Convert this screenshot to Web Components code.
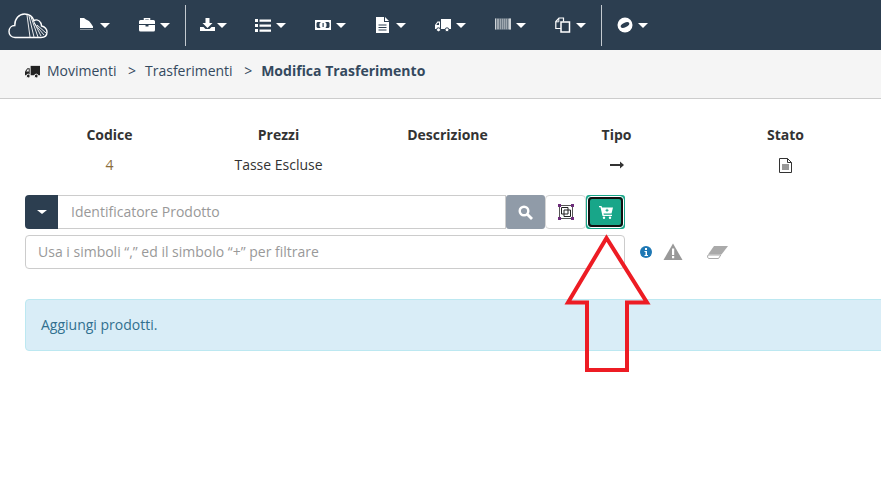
<!DOCTYPE html>
<html>
<head>
<meta charset="utf-8">
<title>Modifica Trasferimento</title>
<style>
    html, body { margin: 0; height: 100%; overflow: hidden; background: #fff; }
    body { font-family: "Open Sans", sans-serif; font-size: 14px; color: #333; position: relative; }
</style>
</head>
<body>
<app-navbar></app-navbar>
<app-breadcrumb>
    <crumb-item icon="truck">Movimenti</crumb-item>
    <crumb-item>Trasferimenti</crumb-item>
    <crumb-item current>Modifica Trasferimento</crumb-item>
</app-breadcrumb>
<info-table></info-table>
<product-search></product-search>
<filter-row></filter-row>
<info-alert>Aggiungi prodotti.</info-alert>
<red-arrow></red-arrow>

<script>
const ICONS = {
    report: '<path d="M1 1h4l2 1.500 3 1.500 2 2.500 2 3V11H1z" fill="currentColor"/><path d="M1 12.500h13" stroke="currentColor" opacity=".45"/>',
    briefcase: '<path d="M5.500 3V1.800h5V3" fill="none" stroke="currentColor" stroke-width="1.500"/><path d="M1.500 3h13A1.500 1.500 0 0 1 16 4.500V7H0V4.500A1.500 1.500 0 0 1 1.500 3zM0 8h6.500v1.500h3V8H16v5a1.500 1.500 0 0 1-1.500 1.500h-13A1.500 1.500 0 0 1 0 13z" fill="currentColor"/>',
    download: '<path d="M5.500 1h4v5h3L7.500 11l-5-5h3z" fill="currentColor"/><path d="M0 10h3.500l2 2h4l2-2H15v4H0z" fill="currentColor"/>',
    list: '<path d="M0 2h3v3H0zM0 7h3v3H0zM0 12h3v3H0z" fill="currentColor"/><path d="M4.500 2.500H16v2.200H4.500zM4.500 7.500H16v2.200H4.500zM4.500 12.500H16v2.200H4.500z" fill="currentColor"/>',
    money: '<path fill-rule="evenodd" d="M0 3h16v10H0zM2.500 5 1.500 6v4l1 1h11l1-1V6l-1-1z" fill="currentColor"/><circle cx="8" cy="8" r="3.600" fill="currentColor"/><path d="M7.500 6h1.200v4H7.500z" fill="#2c3e50"/>',
    file: '<path fill-rule="evenodd" d="M1 0h8v5h5v11H1zM3.500 7.500v1h8v-1zM3.500 10v1h8v-1zM3.500 12.500v1h8v-1z" fill="currentColor"/><path d="M10 0l4 4h-4z" fill="currentColor"/>',
    truck: '<path d="M6 2h10v10H6z" fill="currentColor"/><path d="M5 4.500H2.500L0 8v4h5z" fill="currentColor"/><path d="M2.800 5.700H4v2.300H1.300z" fill="var(--icon-bg,#2c3e50)"/><circle cx="3.500" cy="12.800" r="2" fill="currentColor" stroke="var(--icon-bg,#2c3e50)"/><circle cx="12" cy="12.800" r="2" fill="currentColor" stroke="var(--icon-bg,#2c3e50)"/>',
    barcode: '<path d="M0 1.500h16v11H0z" fill="currentColor" opacity=".55"/><path d="M1 1.500h1v11H1zM4 1.500h1v11H4zM6 1.500h1v11H6zM8 1.500h.8v11H8zM10 1.500h.8v11H10zM12 1.500h1v11h-1z" fill="#2c3e50" opacity=".45"/><path d="M0 1.500h1v11H0zM14 1.500h2v11h-2z" fill="currentColor" opacity=".5"/>',
    copy: '<path d="M6.500 11.500H.8V4.500L4 1h4.500v3.500" fill="none" stroke="currentColor" stroke-width="1.200"/><path d="M6 5h8.500v10H6z" fill="#2c3e50" stroke="currentColor" stroke-width="1.500"/><path d="M3.800 1.500v3.300H1" fill="none" stroke="currentColor"/>',
    compass: '<circle cx="8" cy="8" r="7.500" fill="currentColor"/><ellipse cx="8" cy="8" rx="4.600" ry="2.300" transform="rotate(-25 8 8)" fill="#2c3e50"/>'
};

class AppIcon extends HTMLElement {
    connectedCallback() {
        const size = this.getAttribute('size') || 16;
        this.attachShadow({mode: 'open'}).innerHTML = `
            <style>:host { display: inline-flex; width: ${size}px; height: ${size}px; } svg { display: block; }</style>
            <svg width="${size}" height="${size}" viewBox="0 0 16 16">${ICONS[this.getAttribute('name')]}</svg>`;
    }
}

class NavItem extends HTMLElement {
    connectedCallback() {
        const tight = this.hasAttribute('tight');
        this.attachShadow({mode: 'open'}).innerHTML = `
            <style>
                :host { display: flex; align-items: center; gap: ${tight ? 1 : 5}px; color: #fff; ${tight ? 'margin-right: -1px;' : ''} }
                .caret { width: 0; height: 0; border: 5px solid transparent; border-bottom: 0; border-top-color: #fff; margin-top: 1px; }
            </style>
            <app-icon name="${this.getAttribute('icon')}"></app-icon>
            <span class="caret"></span>`;
    }
}

class AppNavbar extends HTMLElement {
    constructor() {
        super();
        const items = (names) => names.map(n => `<nav-item icon="${n}"></nav-item>`).join('');
        this.attachShadow({mode: 'open'}).innerHTML = `
            <style>
                :host { display: flex; align-items: center; height: 50px; background: #2c3e50; }
                .logo { margin-left: 8px; width: 40px; height: 26px; margin-top: 2px; flex: none; }
                .group { display: flex; align-items: center; gap: 29px; }
                .sep { width: 1px; height: 41px; background: #c4cad0; margin: 0 15px 0 15px; }
            </style>
            <svg class="logo" viewBox="0 0 40 26" fill="none" stroke="#fff">
                <path stroke-width="1.400" d="M9 24.500H7C3 24.500 1 21.500 1 18.500C1 15 3.500 12.500 6.800 12.500C6.500 6 11 1 16.500 1C21 1 24.500 3.500 26 7.500C28 6.500 31 7 32.500 9.500C33.500 11 33.500 12.500 33.500 13C37 13.500 39 16.500 39 19C39 22.500 36.500 24.500 33 24.500Z"/>
                <path stroke-width=".9" d="M19 2 22 24M21 3 26 24M23 4 30 24M25 7 33 23M26 10 36 22M29 12 38 20"/>
            </svg>
            <div class="group" style="margin-left:31px">${items(['report','briefcase'])}</div>
            <div class="sep"></div>
            <div class="group" style="margin-left:-1px"><nav-item icon="download" tight></nav-item>${items(['list','money','file','truck','barcode','copy'])}</div>
            <div class="sep"></div>
            <div class="group">${items(['compass'])}</div>`;
    }
}

class CrumbItem extends HTMLElement {
    connectedCallback() {
        const icon = this.getAttribute('icon');
        this.attachShadow({mode: 'open'}).innerHTML = `
            <style>
                :host { display: inline-flex; align-items: center; color: #34495e; --icon-bg: #f5f5f5; }
                :host([current]) { font-weight: 700; }
                app-icon { color: #222; margin-right: 7px; }
            </style>
            ${icon ? `<app-icon name="${icon}" size="15"></app-icon>` : ''}<slot></slot>`;
    }
}

class AppBreadcrumb extends HTMLElement {
    constructor() {
        super();
        this.attachShadow({mode: 'open'}).innerHTML = `
            <style>
                :host { display: flex; align-items: flex-start; box-sizing: border-box; height: 49px; padding: 11px 25px 0; background: #f5f5f5; border-bottom: 1px solid #ccc; line-height: 20px; }
                ::slotted(crumb-item:not(:first-child))::before { content: ">"; font-weight: 400; margin: 0 9px 0 11.500px; }
            </style>
            <slot></slot>`;
    }
}

class InfoTable extends HTMLElement {
    constructor() {
        super();
        this.attachShadow({mode: 'open'}).innerHTML = `
            <style>
                :host { display: grid; grid-template-columns: repeat(5, 169px); grid-auto-rows: 30px; margin: 21px 0 0 25px; text-align: center; line-height: 30px; height: 60px; color: #333; }
                b { font-weight: 700; }
                .cell { display: flex; justify-content: center; align-items: center; }
            </style>
            <b>Codice</b><b>Prezzi</b><b>Descrizione</b><b>Tipo</b><b>Stato</b>
            <div class="cell" style="color:#8a6d3b">4</div>
            <div class="cell">Tasse Escluse</div>
            <div class="cell"></div>
            <div class="cell">
                <svg width="14" height="10" viewBox="0 0 14 10"><path d="M0 5h11" stroke="#333" stroke-width="2"/><path d="M10 1.500 14 5l-4 3.500z" fill="#333"/></svg>
            </div>
            <div class="cell">
                <svg width="13" height="15" viewBox="0 0 13 15" fill="none" stroke="#333"><path d="M.5.500h8l4 4v10H.5z"/><path d="M8.500.500v4h4M3 7h7M3 9h7M3 11h7"/></svg>
            </div>`;
    }
}

class ProductSearch extends HTMLElement {
    constructor() {
        super();
        this.attachShadow({mode: 'open'}).innerHTML = `
            <style>
                :host { display: flex; height: 34px; margin: 15px 0 0 25px; width: 600px; }
                .drop { width: 33px; background: #2c3e50; border-radius: 4px 0 0 4px; display: flex; align-items: center; justify-content: center; flex: none; }
                .drop i { border: 4px solid transparent; border-bottom: 0; border-top-color: #fff; border-left-width: 5px; border-right-width: 5px; }
                .field { flex: 1; box-sizing: border-box; border: 1px solid #ccc; border-left: 0; padding-left: 13px; line-height: 32px; color: #999; }
                .btn { flex: none; box-sizing: border-box; display: flex; align-items: center; justify-content: center; }
                .search { width: 39px; background: #909ba8; border-radius: 3px; }
                .frame { width: 41px; border: 1px solid #d4d4d4; border-radius: 4px; }
                .cart { width: 39px; background: #18a689; border-radius: 3px; position: relative; }
                .cart::before { content: ""; position: absolute; inset: 1px; border: 1px solid #fff; border-radius: 4px; }
                .cart::after { content: ""; position: absolute; inset: 2px; border: 2px solid #111; border-radius: 4px; }
            </style>
            <div class="drop"><i></i></div>
            <div class="field">Identificatore Prodotto</div>
            <div class="btn search">
                <svg width="15" height="15" viewBox="0 0 15 15" fill="none" stroke="#fff"><circle cx="6" cy="6" r="4.300" stroke-width="2.400"/><path d="M9.500 9.500 14 14" stroke-width="2.800"/></svg>
            </div>
            <div class="btn frame">
                <svg width="16" height="16" viewBox="0 0 16 16" fill="none" stroke="#222"><path d="M1.500 1.500h13v13h-13z" stroke="#555"/><path d="M3.500 3.500h6.500v6.500H3.500zM6 6h6.500v6.500H6z" stroke-width="1"/><path d="M0 0h3v3H0zM13 0h3v3h-3zM0 13h3v3H0zM13 13h3v3h-3z" fill="#6d2c7a" stroke="none"/></svg>
            </div>
            <div class="btn cart">
                <svg width="14" height="13" viewBox="0 0 14 13"><path d="M0 0h2.500l.6 1.500H14l-1.500 6H4.500l.3 1.200H13v1.300H3.500L1.500 1.300H0z" fill="#fff"/><circle cx="5" cy="11.800" r="1.200" fill="#fff"/><circle cx="11" cy="11.800" r="1.200" fill="#fff"/><path d="M8 2.800v3M6.500 4.300h3" stroke="#18a689"/></svg>
            </div>`;
    }
}

class FilterRow extends HTMLElement {
    constructor() {
        super();
        this.attachShadow({mode: 'open'}).innerHTML = `
            <style>
                :host { display: flex; align-items: center; height: 34px; margin: 6px 0 0 25px; }
                .field { box-sizing: border-box; width: 600px; height: 34px; border: 1px solid #ccc; border-radius: 4px; padding-left: 12px; line-height: 32px; color: #999; flex: none; }
                .tools { display: flex; align-items: center; }
            </style>
            <div class="field">Usa i simboli “,” ed il simbolo “+” per filtrare</div>
            <div class="tools">
                <svg style="margin-left:15px" width="12" height="12" viewBox="0 0 12 12"><circle cx="6" cy="6" r="6" fill="#1f78b4"/><path d="M5 2h2v2H5zM4.500 5H7v4h1v1H4.500V9h1V6h-1z" fill="#fff"/></svg>
                <svg style="margin-left:11px" width="20" height="18" viewBox="0 0 20 18"><path d="M10 0.500 19.500 17H.5z" fill="#999"/><path d="M9 5.500h2.200v6.500H9zM9 13h2.200v2.200H9z" fill="#fff"/></svg>
                <svg style="margin-left:24px" width="21" height="15" viewBox="0 0 21 15"><path d="M7 1h14l-6.500 8.500H1z" fill="#aaa"/><path d="M1 10h12.800l-2.300 3.500H1.500L.5 12z" fill="#fff" stroke="#aaa"/></svg>
            </div>`;
    }
}

class InfoAlert extends HTMLElement {
    constructor() {
        super();
        this.attachShadow({mode: 'open'}).innerHTML = `
            <style>
                :host { display: block; box-sizing: border-box; height: 52px; margin: 30px -40px 0 25px; padding: 15px; background: #d9edf7; border: 1px solid #bce8f1; border-radius: 4px; color: #31708f; line-height: 20px; }
            </style>
            <slot></slot>`;
    }
}

class RedArrow extends HTMLElement {
    constructor() {
        super();
        this.attachShadow({mode: 'open'}).innerHTML = `
            <style>
                :host { position: absolute; left: 560px; top: 230px; width: 95px; height: 150px; display: block; pointer-events: none; }
            </style>
            <svg width="95" height="150" viewBox="560 230 95 150">
                <path d="M606.500 238 568 302.500h19V370h40V302.500h20z" fill="none" stroke="#ed1c24" stroke-width="4" stroke-linejoin="miter"/>
            </svg>`;
    }
}

customElements.define('app-icon', AppIcon);
customElements.define('nav-item', NavItem);
customElements.define('app-navbar', AppNavbar);
customElements.define('crumb-item', CrumbItem);
customElements.define('app-breadcrumb', AppBreadcrumb);
customElements.define('info-table', InfoTable);
customElements.define('product-search', ProductSearch);
customElements.define('filter-row', FilterRow);
customElements.define('info-alert', InfoAlert);
customElements.define('red-arrow', RedArrow);
</script>
</body>
</html>
